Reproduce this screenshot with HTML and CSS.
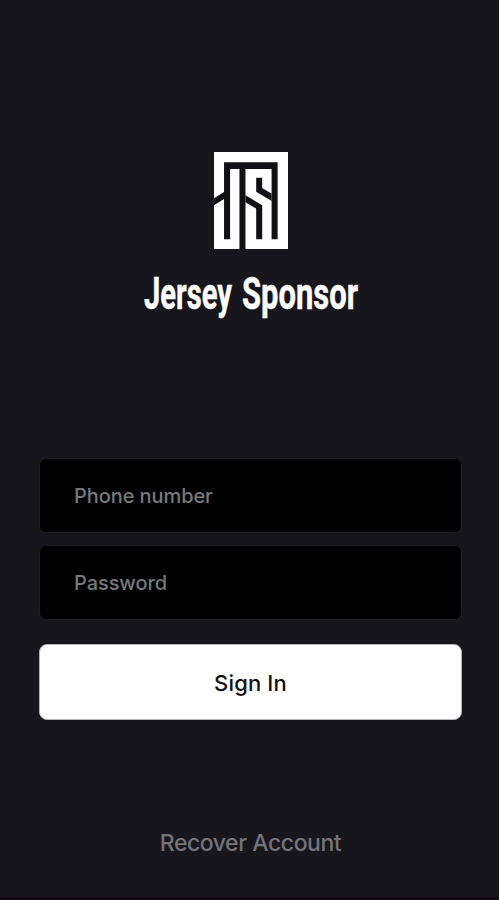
FILE: index.html
```
<!DOCTYPE html>
<html lang="en">
<head>
    <meta charset="UTF-8">
    <meta name="viewport" content="width=device-width, initial-scale=1.0">
    <title>Jersey Sponsor</title>
    <link rel="stylesheet" href="styles.css">
</head>
<body>
    <main class="login">
        <!-- Logo -->
        <div class="brand">
            <svg class="brand-mark" viewBox="28 21 221 291" preserveAspectRatio="none" aria-hidden="true">
                <rect class="mark-fill" x="28" y="21" width="221" height="291"/>
                <path class="mark-cut" d="M58 52H218V283H200V72H122V312H104V72H76V283H58V162L28 181V160L58 141Z"/>
                <path class="mark-cut" d="M154 98H172V129L200 146V168L154 140Z"/>
                <path class="mark-cut" d="M122 151L172 181V283H154V191L122 172Z"/>
            </svg>
            <svg class="brand-name" viewBox="0 0 226 60" role="heading" aria-level="1">
                <text x="6" y="42.5" textLength="88" lengthAdjust="spacingAndGlyphs">Jersey</text>
                <text x="104" y="42.5" textLength="116" lengthAdjust="spacingAndGlyphs">Sponsor</text>
            </svg>
        </div>

        <form class="login-form">
            <input class="field" type="tel" placeholder="Phone number">
            <input class="field" type="password" placeholder="Password">
            <button class="sign-in" type="button">Sign In</button>
        </form>

        <a class="recover" href="#">Recover Account</a>
    </main>
</body>
</html>
```
FILE: styles.css
```
* {
    box-sizing: border-box;
}

body {
    margin: 0;
    background-color: #17161c;
    font-family: Inter, "Liberation Sans", sans-serif;
}

.login {
    display: flex;
    flex-direction: column;
    align-items: center;
    height: 900px;
    padding: 152px 37px 0 39px;
    border-bottom: 3px solid #140a16;
}

.brand {
    display: flex;
    flex-direction: column;
    align-items: center;
}

.brand-mark {
    width: 74px;
    height: 97px;
}

.mark-fill {
    fill: #fff;
}

.mark-cut {
    fill: #111016;
}

.brand-name {
    width: 226px;
    height: 60px;
    margin-top: 17px;
    overflow: visible;
    fill: #fff;
    stroke: #fff;
    stroke-width: 0.5;
    font-family: Roboto, "Liberation Sans", sans-serif;
    font-size: 44px;
    font-weight: 700;
}

.login-form {
    display: flex;
    flex-direction: column;
    width: 100%;
    margin-top: 132px;
}

.field {
    height: 75px;
    margin-bottom: 12px;
    padding: 0 33px 0 34px;
    background-color: #000;
    border: 1px solid #1e1e22;
    border-radius: 7px;
    color: #fff;
    font-family: inherit;
    font-size: 20px;
    font-weight: 500;
}

.field::placeholder {
    color: #76797b;
    letter-spacing: -0.08px;
    opacity: 1;
}

.sign-in {
    height: 76px;
    margin-top: 12px;
    padding-top: 3px;
    background-color: #fff;
    border: 1px solid #b5b5b7;
    border-radius: 8px;
    color: #111114;
    font-family: inherit;
    font-size: 22px;
    font-weight: 500;
    letter-spacing: 0.15px;
}

.recover {
    margin-top: 108px;
    color: #74747a;
    font-size: 23px;
    font-weight: 500;
    letter-spacing: -0.45px;
    line-height: 30px;
    text-decoration: none;
}
```
